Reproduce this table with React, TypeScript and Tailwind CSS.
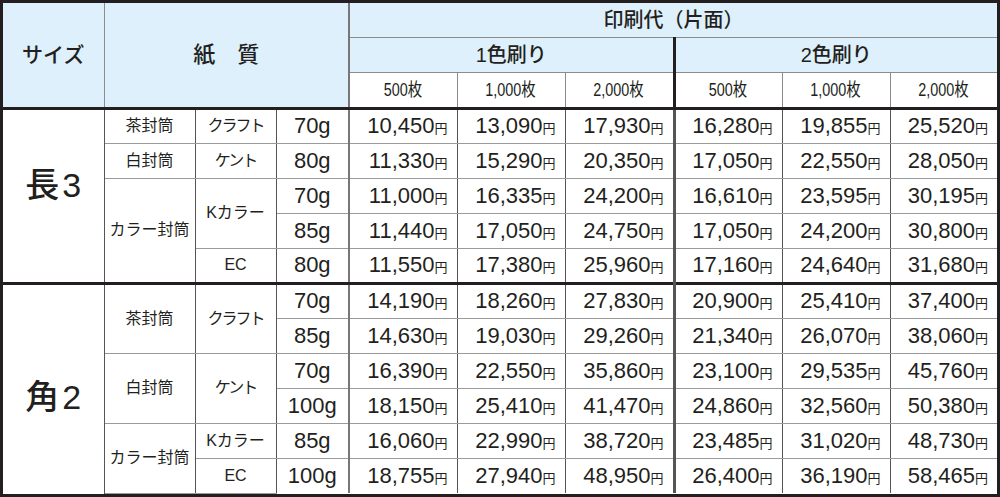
import React from 'react';

type Row = {
  size?: { label: string; span: number; pad: string };
  env?: { label: string; span: number };
  paper?: { label: string; span: number; latin?: boolean };
  weight: string;
  prices: string[];
  first?: boolean;
};

const rows: Row[] = [
  {
    size: { label: '長3', span: 5, pad: 'pb-[22px]' },
    env: { label: '茶封筒', span: 1 },
    paper: { label: 'クラフト', span: 1 },
    weight: '70g',
    prices: ['10,450', '13,090', '17,930', '16,280', '19,855', '25,520'],
    first: true,
  },
  {
    env: { label: '白封筒', span: 1 },
    paper: { label: 'ケント', span: 1 },
    weight: '80g',
    prices: ['11,330', '15,290', '20,350', '17,050', '22,550', '28,050'],
  },
  {
    env: { label: 'カラー封筒', span: 3 },
    paper: { label: 'Kカラー', span: 2 },
    weight: '70g',
    prices: ['11,000', '16,335', '24,200', '16,610', '23,595', '30,195'],
  },
  { weight: '85g', prices: ['11,440', '17,050', '24,750', '17,050', '24,200', '30,800'] },
  {
    paper: { label: 'EC', span: 1, latin: true },
    weight: '80g',
    prices: ['11,550', '17,380', '25,960', '17,160', '24,640', '31,680'],
  },
  {
    size: { label: '角2', span: 6, pad: 'pt-[16px]' },
    env: { label: '茶封筒', span: 2 },
    paper: { label: 'クラフト', span: 2 },
    weight: '70g',
    prices: ['14,190', '18,260', '27,830', '20,900', '25,410', '37,400'],
    first: true,
  },
  { weight: '85g', prices: ['14,630', '19,030', '29,260', '21,340', '26,070', '38,060'] },
  {
    env: { label: '白封筒', span: 2 },
    paper: { label: 'ケント', span: 2 },
    weight: '70g',
    prices: ['16,390', '22,550', '35,860', '23,100', '29,535', '45,760'],
  },
  { weight: '100g', prices: ['18,150', '25,410', '41,470', '24,860', '32,560', '50,380'] },
  {
    env: { label: 'カラー封筒', span: 2 },
    paper: { label: 'Kカラー', span: 1 },
    weight: '85g',
    prices: ['16,060', '22,990', '38,720', '23,485', '31,020', '48,730'],
  },
  {
    paper: { label: 'EC', span: 1, latin: true },
    weight: '100g',
    prices: ['18,755', '27,940', '48,950', '26,400', '36,190', '58,465'],
  },
];

const counts = ['500枚', '1,000枚', '2,000枚', '500枚', '1,000枚', '2,000枚'];

const cell = 'p-0 border border-[#9a9a9a] border-l-[#555] border-r-[#555]';
const head = 'p-0 border border-[#8c8c8c] bg-[#ddf0fb]';
const top = 'border-t-[3px] border-t-[#231f20]';

export default function App() {
  return (
    <div className="w-[1000px] h-[497px] overflow-hidden border-[3px] border-[#231f20] bg-white text-[#231f20] font-['Liberation_Sans','Noto_Sans_CJK_JP',sans-serif]">
      <table className="w-full table-fixed border-collapse leading-none">
        <colgroup>
          <col className="w-[101px]" />
          <col className="w-[91px]" />
          <col className="w-[81px]" />
          <col className="w-[73px]" />
          <col className="w-[108px]" />
          <col className="w-[108px]" />
          <col className="w-[109px]" />
          <col className="w-[108px]" />
          <col className="w-[108px]" />
          <col className="w-[107px]" />
        </colgroup>
        <thead>
          <tr className="h-[34px]">
            <th rowSpan={3} className={`${head} border-t-0 border-l-0 text-[21px] font-medium`}>
              サイズ
            </th>
            <th rowSpan={3} colSpan={3} className={`${head} border-t-0 text-[22px] font-medium`}>
              紙　質
            </th>
            <th colSpan={6} className={`${head} border-t-0 border-r-0 border-l-2 border-l-[#777] text-[20px] font-medium`}>
              印刷代（片面）
            </th>
          </tr>
          <tr className="h-[35px]">
            <th colSpan={3} className={`${head} border-l-2 border-l-[#777] text-[20px] font-medium`}>
              1色刷り
            </th>
            <th colSpan={3} className={`${head} border-r-0 border-l-[3px] border-l-[#231f20] text-[20px] font-medium`}>
              2色刷り
            </th>
          </tr>
          <tr className="h-[36px]">
            {counts.map((c, i) => (
              <th
                key={i}
                className={`p-0 border border-[#8c8c8c] bg-white font-normal ${
                  i === 0 ? 'border-l-2 border-l-[#777]' : ''
                } ${i === 3 ? 'border-l-[3px] border-l-[#231f20]' : ''} ${i === 5 ? 'border-r-0' : ''}`}
              >
                <span className="inline-block scale-x-[0.8] text-[18px]">{c}</span>
              </th>
            ))}
          </tr>
        </thead>
        <tbody>
          {rows.map((r, ri) => (
            <tr key={ri} className="h-[35px]">
              {r.size && (
                <td
                  rowSpan={r.size.span}
                  className={`${cell} ${top} border-l-0 border-r-[#333] ${ri === 5 ? 'border-b-0' : ''} text-center text-[34px] font-medium ${r.size.pad}`}
                >
                  {r.size.label.slice(0, 1)}
                  <span className="ml-[3px] font-['Liberation_Sans',sans-serif] font-normal">{r.size.label.slice(1)}</span>
                </td>
              )}
              {r.env && (
                <td rowSpan={r.env.span} className={`${cell} ${r.first ? top : ''} text-center text-[16px]`}>
                  {r.env.label}
                </td>
              )}
              {r.paper && (
                <td
                  rowSpan={r.paper.span}
                  className={`${cell} ${r.first ? top : ''} text-center text-[16px] ${
                    r.paper.latin || r.paper.label === 'Kカラー' ? '' : 'tracking-[-2px]'
                  }`}
                >
                  {r.paper.label}
                </td>
              )}
              <td className={`${cell} ${r.first ? top : ''} ${ri === rows.length - 1 ? 'border-b-0' : ''} text-center text-[22px]`}>
                {r.weight}
              </td>
              {r.prices.map((p, i) => (
                <td
                  key={i}
                  className={`${cell} ${r.first ? top : ''} ${i === 0 ? 'border-l-2 border-l-[#777]' : ''} ${
                    i === 3 ? 'border-l-[3px] border-l-[#231f20]' : ''
                  } ${i === 5 ? 'border-r-0' : ''} ${ri === rows.length - 1 ? 'border-b-0' : ''} text-right pr-[9px] whitespace-nowrap`}
                >
                  <span className="text-[22px]">{p}</span>
                  <span className="text-[13px] font-['Noto_Sans_CJK_JP',sans-serif]">円</span>
                </td>
              ))}
            </tr>
          ))}
        </tbody>
      </table>
    </div>
  );
}
